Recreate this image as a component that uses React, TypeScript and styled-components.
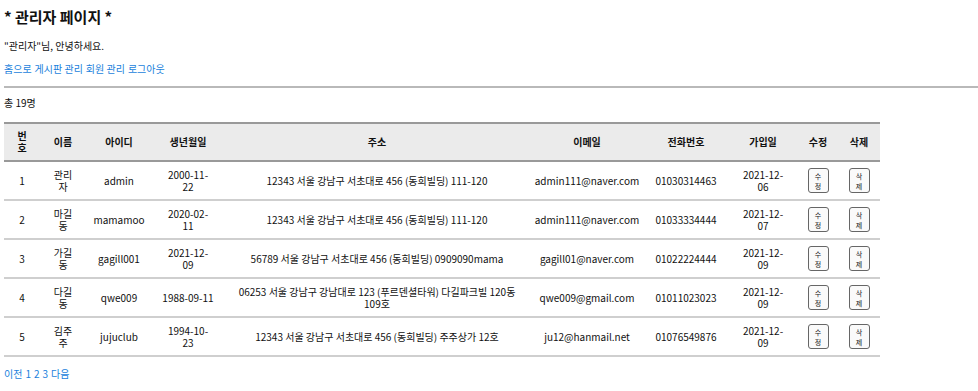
import styled, { createGlobalStyle } from "styled-components";

const GlobalStyle = createGlobalStyle`
  body {
    margin: 0;
    background: #fff;
    color: #111;
    font-family: "Noto Sans CJK KR", "Noto Sans", sans-serif;
  }
`;

const Page = styled.div`
  padding: 0 0 0 4px;
`;

const Title = styled.h1`
  margin: 7px 0 0;
  font-size: 15px;
  line-height: 20px;
  font-weight: 700;
`;

const Greeting = styled.p`
  margin: 12px 0 0;
  font-size: 10px;
  line-height: 14px;
`;

const Nav = styled.nav`
  margin-top: 9px;
  display: flex;
  gap: 3px;
  font-size: 10px;
  line-height: 14px;
`;

const NavLink = styled.a`
  color: #1a7fdc;
  text-decoration: none;
  cursor: pointer;
`;

const Divider = styled.hr`
  margin: 10px 0 0;
  border: none;
  height: 2px;
  background: #b9b9b9;
`;

const Count = styled.p`
  margin: 8px 0 0;
  font-size: 10px;
  line-height: 14px;
`;

const Table = styled.table`
  margin-top: 12px;
  width: 876px;
  border-collapse: collapse;
  table-layout: fixed;
  font-size: 10px;
  line-height: 12px;
  text-align: center;
`;

const Head = styled.thead`
  background: #ebebeb;
  th {
    font-weight: 700;
    height: 36px;
    padding: 0 4px;
    border-top: 2px solid #999;
    border-bottom: 2px solid #999;
  }
`;

const Row = styled.tr`
  td {
    height: 37px;
    padding: 0 4px;
    border-bottom: 2px solid #cfcfcf;
  }
`;

const Narrow = styled.span<{ $w: number }>`
  display: inline-block;
  width: ${(p) => p.$w}px;
`;

const Address = styled.span`
  word-break: keep-all;
`;

const Line = styled.span`
  display: block;
`;

const SmallButton = styled.button`
  width: 21px;
  height: 25px;
  padding: 0;
  border: 1px solid #666;
  border-radius: 3px;
  background: #fafafa;
  font-family: inherit;
  font-size: 7px;
  line-height: 10px;
  color: #222;
  vertical-align: middle;
`;

const Pager = styled.div`
  margin-top: 10px;
  display: flex;
  gap: 3px;
  font-size: 10px;
  line-height: 14px;
`;

const widths = [36, 46, 66, 72, 306, 114, 84, 70, 40, 42];

type Member = {
  no: number;
  name: string;
  id: string;
  birth: string[];
  address: string;
  email: string;
  phone: string;
  joined: string[];
};

const members: Member[] = [
  {
    no: 1,
    name: "관리자",
    id: "admin",
    birth: ["2000-11-", "22"],
    address: "12343 서울 강남구 서초대로 456 (동희빌딩) 111-120",
    email: "admin111@naver.com",
    phone: "01030314463",
    joined: ["2021-12-", "06"],
  },
  {
    no: 2,
    name: "마길동",
    id: "mamamoo",
    birth: ["2020-02-", "11"],
    address: "12343 서울 강남구 서초대로 456 (동희빌딩) 111-120",
    email: "admin111@naver.com",
    phone: "01033334444",
    joined: ["2021-12-", "07"],
  },
  {
    no: 3,
    name: "가길동",
    id: "gagill001",
    birth: ["2021-12-", "09"],
    address: "56789 서울 강남구 서초대로 456 (동희빌딩) 0909090mama",
    email: "gagill01@naver.com",
    phone: "01022224444",
    joined: ["2021-12-", "09"],
  },
  {
    no: 4,
    name: "다길동",
    id: "qwe009",
    birth: ["1988-09-11"],
    address: "06253 서울 강남구 강남대로 123 (푸르덴셜타워) 다길파크빌 120동 109호",
    email: "qwe009@gmail.com",
    phone: "01011023023",
    joined: ["2021-12-", "09"],
  },
  {
    no: 5,
    name: "김주주",
    id: "jujuclub",
    birth: ["1994-10-", "23"],
    address: "12343 서울 강남구 서초대로 456 (동희빌딩) 주주상가 12호",
    email: "ju12@hanmail.net",
    phone: "01076549876",
    joined: ["2021-12-", "09"],
  },
];

const headers = ["번호", "이름", "아이디", "생년월일", "주소", "이메일", "전화번호", "가입일", "수정", "삭제"];

const App = () => {
  return (
    <Page>
      <GlobalStyle />
      <Title>* 관리자 페이지 *</Title>
      <Greeting>"관리자"님, 안녕하세요.</Greeting>
      <Nav>
        <NavLink>홈으로</NavLink>
        <NavLink>게시판 관리</NavLink>
        <NavLink>회원 관리</NavLink>
        <NavLink>로그아웃</NavLink>
      </Nav>
      <Divider />
      <Count>총 19명</Count>
      <Table>
        <colgroup>
          {widths.map((w, i) => (
            <col key={i} style={{ width: w }} />
          ))}
        </colgroup>
        <Head>
          <tr>
            {headers.map((h) => (
              <th key={h}>{h === "번호" ? <Narrow $w={12}>{h}</Narrow> : h}</th>
            ))}
          </tr>
        </Head>
        <tbody>
          {members.map((m) => (
            <Row key={m.no}>
              <td>{m.no}</td>
              <td>
                <Narrow $w={21}>{m.name}</Narrow>
              </td>
              <td>{m.id}</td>
              <td>
                {m.birth.map((l) => (
                  <Line key={l}>{l}</Line>
                ))}
              </td>
              <td>
                <Address>{m.address}</Address>
              </td>
              <td>{m.email}</td>
              <td>{m.phone}</td>
              <td>
                {m.joined.map((l) => (
                  <Line key={l}>{l}</Line>
                ))}
              </td>
              <td>
                <SmallButton>
                  <Line>수</Line>
                  <Line>정</Line>
                </SmallButton>
              </td>
              <td>
                <SmallButton>
                  <Line>삭</Line>
                  <Line>제</Line>
                </SmallButton>
              </td>
            </Row>
          ))}
        </tbody>
      </Table>
      <Pager>
        <NavLink>이전</NavLink>
        <NavLink>1</NavLink>
        <NavLink>2</NavLink>
        <NavLink>3</NavLink>
        <NavLink>다음</NavLink>
      </Pager>
    </Page>
  );
};

export default App;
